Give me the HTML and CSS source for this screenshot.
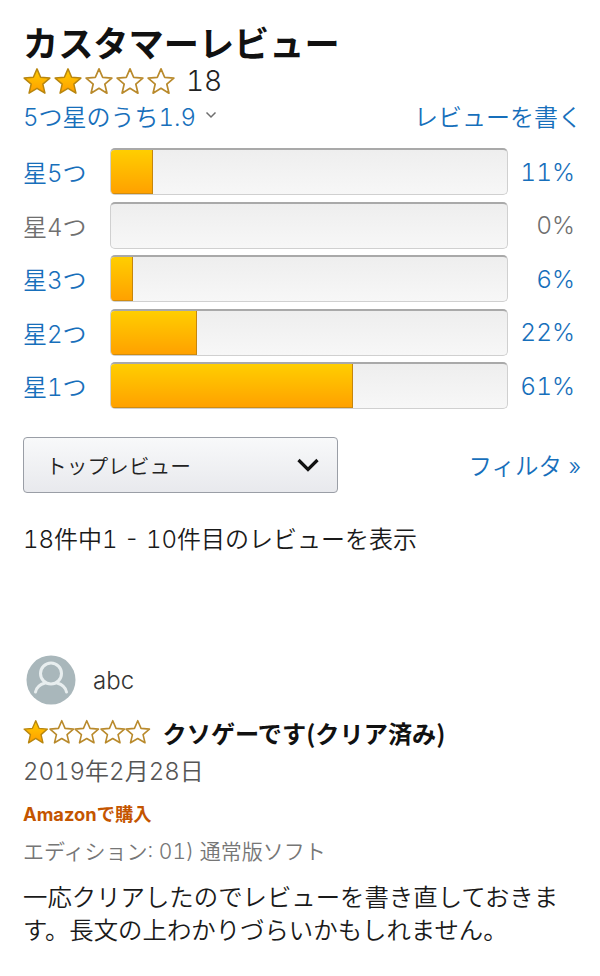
FILE: index.html
```html
<!DOCTYPE html>
<html lang="ja">
<head>
<meta charset="utf-8">
<title>カスタマーレビュー</title>
<link rel="stylesheet" href="styles.css">
</head>
<body>
<svg class="defs" width="0" height="0" aria-hidden="true">
  <defs>
    <linearGradient id="gold" x1="0" y1="0" x2="0" y2="1">
      <stop offset="0" stop-color="#ffce00"/>
      <stop offset="1" stop-color="#ff9d00"/>
    </linearGradient>
    <path id="star" d="M12 1.6l3.1 7.2 7.9.7-6 5.2 1.8 7.7L12 18.3l-6.8 4.1L7 14.7 1 9.500l7.900-.7z"/>
  </defs>
</svg>
<main class="page">
  <h1 class="title">カスタマーレビュー</h1>
  <div class="summary">
    <span class="stars stars-lg">
      <svg viewBox="0 0 24 24"><use href="#star" class="on"/></svg>
      <svg viewBox="0 0 24 24"><use href="#star" class="on"/></svg>
      <svg viewBox="0 0 24 24"><use href="#star" class="off"/></svg>
      <svg viewBox="0 0 24 24"><use href="#star" class="off"/></svg>
      <svg viewBox="0 0 24 24"><use href="#star" class="off"/></svg>
    </span>
    <span class="count">18</span>
  </div>
  <div class="links">
    <a class="link rating">5つ星のうち1.9
      <svg class="caret" viewBox="0 0 12 8"><path d="M1.500 1.500L6 6l4.500-4.500"/></svg>
    </a>
    <a class="link write">レビューを書く</a>
  </div>

  <div class="hist">
    <div class="row link"><span class="lab">星5つ</span><div class="bar"><div class="fill" style="width:10.700%"></div></div><span class="pct">11%</span></div>
    <div class="row muted"><span class="lab">星4つ</span><div class="bar"></div><span class="pct">0%</span></div>
    <div class="row link"><span class="lab">星3つ</span><div class="bar"><div class="fill" style="width:5.600%"></div></div><span class="pct">6%</span></div>
    <div class="row link"><span class="lab">星2つ</span><div class="bar"><div class="fill" style="width:21.800%"></div></div><span class="pct">22%</span></div>
    <div class="row link"><span class="lab">星1つ</span><div class="bar"><div class="fill" style="width:61%"></div></div><span class="pct">61%</span></div>
  </div>

  <div class="controls">
    <div class="select">
      <span>トップレビュー</span>
      <svg class="chev" viewBox="0 0 24 16"><path d="M2.500 3L12 12.500 21.500 3"/></svg>
    </div>
    <a class="link filter">フィルタ »</a>
  </div>

  <p class="range">18件中1 - 10件目のレビューを表示</p>

  <article class="review">
    <div class="author">
      <svg class="avatar" viewBox="0 0 50 50">
        <circle cx="25" cy="25" r="24.500" class="av-bg"/>
        <circle cx="25" cy="18.500" r="10.500" class="av-line"/>
        <path d="M9.500 37c1-5 6-8 9.500-9M40.500 37c-1-5-6-8-9.500-9" class="av-line"/>
      </svg>
      <span class="name">abc</span>
    </div>
    <div class="headline">
      <span class="stars stars-sm">
        <svg viewBox="0 0 24 24"><use href="#star" class="on"/></svg>
        <svg viewBox="0 0 24 24"><use href="#star" class="off"/></svg>
        <svg viewBox="0 0 24 24"><use href="#star" class="off"/></svg>
        <svg viewBox="0 0 24 24"><use href="#star" class="off"/></svg>
        <svg viewBox="0 0 24 24"><use href="#star" class="off"/></svg>
      </span>
      <span class="rtitle">クソゲーです(クリア済み)</span>
    </div>
    <div class="date">2019年2月28日</div>
    <div class="verified">Amazonで購入</div>
    <div class="edition">エディション: 01) 通常版ソフト</div>
    <p class="body">一応クリアしたのでレビューを書き直しておきます。長文の上わかりづらいかもしれません。</p>
  </article>
</main>
</body>
</html>
```
FILE: styles.css
```css
* { box-sizing: border-box; }
html, body { margin: 0; padding: 0; background: #fff; }
body {
  width: 600px;
  height: 976px;
  overflow: hidden;
  font-family: Inter, "Noto Sans CJK JP", sans-serif;
  font-weight: 350;
  font-variant-numeric: tabular-nums;
  color: #111;
}
.defs { position: absolute; }
.page { padding: 19px 20px 0 23px; }
.link { color: #176fbb; }
.muted { color: #6f6f6f; }

.title {
  margin: 0;
  height: 46px;
  font-family: "Noto Sans CJK JP", sans-serif;
  font-size: 35.200px;
  line-height: 46px;
  font-weight: 700;
  color: #111;
}

.summary { display: flex; align-items: center; height: 34px; margin-top: -1px; }
.stars { display: inline-flex; }
.stars svg { display: block; }
.stars-lg { gap: 3px; }
.stars-lg svg { width: 28px; height: 28px; }
.stars-sm { gap: 0; }
.stars-sm svg { width: 25.500px; height: 25.500px; }
.on { fill: url(#gold); stroke: #b8860f; stroke-width: 1.300; stroke-linejoin: round; }
.off { fill: #fff; stroke: #b98a2c; stroke-width: 1.500; stroke-linejoin: round; }
.count { margin-left: 11px; font-size: 28px; line-height: 34px; color: #222; }

.links { display: flex; justify-content: space-between; align-items: center; height: 32px; margin-top: 1px; }
.rating { display: inline-flex; align-items: center; font-size: 24px; white-space: nowrap; }
.write { font-size: 24px; margin-right: -2px; white-space: nowrap; }
.caret { width: 12px; height: 8px; margin-left: 9px; fill: none; stroke: #6e6e6e; stroke-width: 1.500; }

.hist { margin-top: 17px; display: flex; flex-direction: column; gap: 6.500px; }
.row { display: flex; align-items: center; height: 47px; font-size: 24px; }
.lab { width: 87px; flex: none; }
.bar {
  width: 398px;
  height: 47px;
  flex: none;
  border-radius: 5px;
  background: linear-gradient(#eeeeee, #f7f7f7);
  border: 1px solid #d0d0d0;
  border-top: 2px solid #a9a9a9;
  overflow: hidden;
  display: flex;
}
.fill {
  height: 100%;
  background: linear-gradient(#ffce00, #ffa000);
  border-right: 1px solid #c5860e;
}
.row .fill { box-shadow: inset 0 -1px 0 #d08c10; }
.pct { width: 67px; flex: none; text-align: right; font-size: 24.500px; }

.controls { display: flex; justify-content: space-between; align-items: center; margin-top: 28px; }
.select {
  width: 315px;
  height: 56px;
  display: flex;
  align-items: center;
  justify-content: space-between;
  padding: 0 17px 0 22px;
  border: 1px solid #9a9ea6;
  border-radius: 4px;
  background: linear-gradient(#f8f9fa, #e8e9ed);
  font-size: 20.700px;
  color: #222;
}
.chev { width: 24px; height: 16px; fill: none; stroke: #111; stroke-width: 3.200; }
.filter { font-size: 23.500px; margin-right: -1px; }

.range { margin: 30px 0 0; font-size: 24px; line-height: 34px; color: #1a1a1a; }

.review { margin-top: 98px; }
.author { display: flex; align-items: center; height: 50px; margin-left: 3px; }
.avatar { width: 50px; height: 50px; flex: none; }
.av-bg { fill: #a9b7bb; }
.av-line { fill: none; stroke: #e8eeef; stroke-width: 3; stroke-linecap: round; }
.name { margin-left: 17px; font-size: 24px; color: #333; }
.headline { display: flex; align-items: center; height: 36px; margin-top: 9px; }
.rtitle { margin-left: 12px; font-size: 24.200px; font-weight: 700; font-family: "Noto Sans CJK JP", sans-serif; color: #111; }
.date { margin-top: 5px; font-size: 24px; line-height: 34px; color: #555; }
.verified { margin-top: 12px; font-size: 18.300px; line-height: 26px; font-weight: 700; color: #c45500; }
.edition { margin-top: 10px; font-size: 21px; line-height: 30px; color: #767676; }
.body { margin: 14px 0 0; font-size: 24.400px; line-height: 33px; color: #1a1a1a; width: 545px; }
```
